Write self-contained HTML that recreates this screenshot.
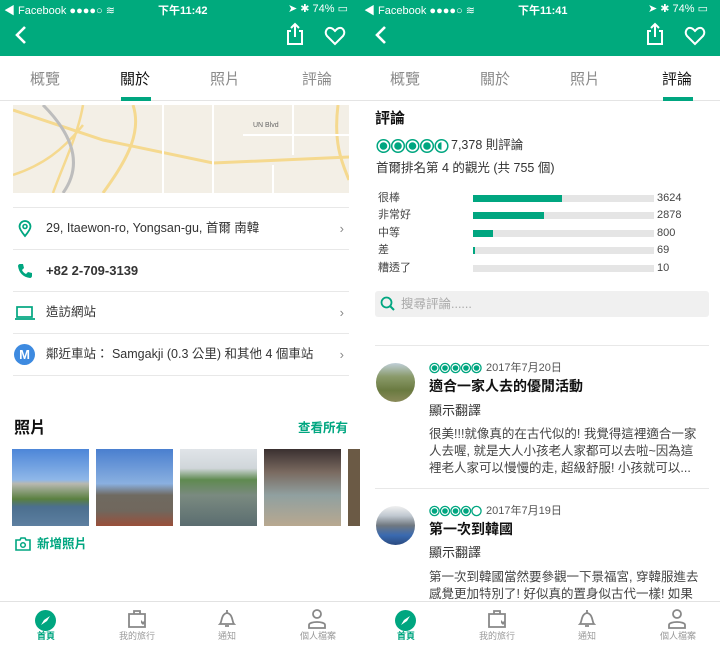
<!DOCTYPE html>
<html><head><meta charset="utf-8"><style>
*{margin:0;padding:0;box-sizing:border-box}
body{width:720px;height:645px;overflow:hidden;background:#fff;font-family:"Liberation Sans","Noto Sans CJK TC",sans-serif;position:relative}
.ph{position:absolute;top:0;width:360px;height:645px;overflow:hidden;background:#fff}
.g{color:#00a680}
.abs{position:absolute}
.hdr{position:absolute;left:0;top:0;width:360px;height:56px;background:#00aa7d;color:#fff}
.sb{position:absolute;top:2px;font-size:11px;color:#fff}
.tabs{position:absolute;top:56px;left:0;width:360px;height:45px;border-bottom:1px solid #e4e4e4}
.tab{position:absolute;top:12px;font-size:15px;color:#8a8a8a;width:60px;text-align:center}
.tab.on{color:#111}
.ul{position:absolute;top:41px;width:30px;height:4px;background:#00a680}
.line{position:absolute;height:1px;background:#e8e8e8}
.t{position:absolute;font-size:12.5px;color:#333;white-space:nowrap;line-height:1}
.chev{position:absolute;right:16px;color:#888;font-size:13px;line-height:1}
.nav{position:absolute;top:601px;left:0;width:360px;height:44px;border-top:1px solid #e2e2e2;background:#fff}
.nl{position:absolute;top:30px;font-size:9px;color:#999;width:60px;text-align:center;line-height:1}
.bar{position:absolute;left:113px;width:181px;height:7px;background:#e5e5e5}
.bar i{display:block;height:7px;background:#00a680}
.bl{position:absolute;left:18px;font-size:11px;color:#444;line-height:1}
.bn{position:absolute;left:297px;font-size:11px;color:#444;line-height:1}
.rv{position:absolute;left:69px;font-size:12.5px;color:#444;line-height:17px;width:272px}
</style></head><body>

<div class="ph" style="left:0">
 <div class="hdr">
  <div class="sb" style="left:4px">◀ Facebook ●●●●○ ≋</div>
  <div class="sb" style="left:158px;font-weight:bold">下午11:42</div>
  <div class="sb" style="left:288px">➤ ✱ 74% ▭</div>
  <svg class="abs" style="left:14px;top:25px" width="16" height="20"><path d="M11 2 L3 10 L11 18" stroke="#fff" stroke-width="2.6" fill="none"/></svg>
  <svg class="abs" style="left:285px;top:22px" width="20" height="24"><path d="M6 9 H3 V22 H17 V9 H14 M10 15 V2 M6 6 L10 2 L14 6" stroke="#fff" stroke-width="2" fill="none"/></svg>
  <svg class="abs" style="left:324px;top:26px" width="22" height="20"><path d="M11 18 L3 10 C0 6 3 1 7 2 C9 2.5 10 4 11 5 C12 4 13 2.5 15 2 C19 1 22 6 19 10 Z" stroke="#fff" stroke-width="2" fill="none"/></svg>
 </div>
 <div class="tabs">
  <div class="tab" style="left:15px">概覽</div><div class="tab on" style="left:105px">關於</div>
  <div class="tab" style="left:195px">照片</div><div class="tab" style="left:287px">評論</div>
  <div class="ul" style="left:121px"></div>
 </div>
 <svg class="abs" style="left:13px;top:105px" width="336" height="88">
  <rect width="336" height="88" fill="#f3efe6"/>
  <path d="M0 5 L90 35 L200 58 L336 52" stroke="#f5d98f" stroke-width="3" fill="none"/>
  <path d="M120 0 C130 30 110 60 90 88" stroke="#f5d98f" stroke-width="3" fill="none"/>
  <path d="M70 0 C65 30 50 60 40 88 M0 70 C30 60 50 45 70 20" stroke="#f5d98f" stroke-width="2.5" fill="none"/>
  <path d="M325 0 C320 40 330 60 336 75" stroke="#f5d98f" stroke-width="3" fill="none"/>
  <path d="M30 0 C60 30 70 60 50 88" stroke="#bdbdbd" stroke-width="3" fill="none"/>
  <path d="M200 0 V88 M230 30 H336 M150 0 V88 M260 60 V88 M280 0 V50" stroke="#fff" stroke-width="2" fill="none"/>
  <text x="240" y="22" font-size="7" fill="#666" font-family="Liberation Sans">UN Blvd</text>
 </svg>
 <div class="line" style="left:13px;width:336px;top:207px"></div>
 <div class="line" style="left:13px;width:336px;top:249px"></div>
 <div class="line" style="left:13px;width:336px;top:291px"></div>
 <div class="line" style="left:13px;width:336px;top:333px"></div>
 <div class="line" style="left:13px;width:336px;top:375px"></div>
 <svg class="abs" style="left:18px;top:220px" width="14" height="18"><path d="M7 16 C2 10 1.5 8 1.5 6.5 A5.5 5.5 0 0 1 12.5 6.5 C12.5 8 12 10 7 16Z" stroke="#00a680" stroke-width="1.8" fill="none"/><circle cx="7" cy="6.5" r="2" stroke="#00a680" stroke-width="1.6" fill="none"/></svg>
 <div class="t" style="left:46px;top:222px">29, Itaewon-ro, Yongsan-gu, 首爾 南韓</div><div class="chev" style="top:222px">›</div>
 <svg class="abs" style="left:17px;top:263px" width="16" height="16"><path d="M3 1 L6 1 L7 5 L5 7 C6 9 7 10 9 11 L11 9 L15 10 L15 13 C15 14 14 15 13 15 C6 14 2 10 1 3 C1 2 2 1 3 1Z" fill="#00a680"/></svg>
 <div class="t g" style="left:46px;top:264px;font-weight:bold;font-size:13px">+82 2-709-3139</div>
 <svg class="abs" style="left:15px;top:306px" width="20" height="14"><rect x="2" y="1" width="15" height="10" stroke="#00a680" stroke-width="1.7" fill="none"/><path d="M0 13 H20" stroke="#00a680" stroke-width="1.7"/></svg>
 <div class="t" style="left:46px;top:306px">造訪網站</div><div class="chev" style="top:306px">›</div>
 <div class="abs" style="left:14px;top:344px;width:21px;height:21px;border-radius:50%;background:#3d8ae0;color:#fff;font-weight:bold;font-size:13px;text-align:center;line-height:21px">M</div>
 <div class="t" style="left:46px;top:348px">鄰近車站： Samgakji (0.3 公里) 和其他 4 個車站</div><div class="chev" style="top:348px">›</div>
 <div class="abs" style="left:14px;top:421px;font-size:16px;font-weight:bold;color:#111;line-height:1">照片</div>
 <div class="abs g" style="left:298px;top:422px;font-size:12.5px;font-weight:bold;line-height:1">查看所有</div>
 <div class="abs" style="left:12px;top:449px;width:77px;height:77px;background:linear-gradient(#4d86d8 0,#8fb7e8 40%,#b8b8b0 45%,#5a8040 65%,#4b6f8f 75%,#5d7fa0 100%)"></div>
 <div class="abs" style="left:96px;top:449px;width:77px;height:77px;background:linear-gradient(#4a7fcf 0,#8ab0e0 45%,#6f6a60 60%,#70675d 80%,#9a4f3a 100%)"></div>
 <div class="abs" style="left:180px;top:449px;width:77px;height:77px;background:linear-gradient(#e0e4e8 0,#d0d6da 25%,#5f8a50 40%,#7a8a80 60%,#5b6d70 100%)"></div>
 <div class="abs" style="left:264px;top:449px;width:77px;height:77px;background:linear-gradient(#3a3030 0,#7a6a60 30%,#90a0a0 60%,#b8a890 100%)"></div>
 <div class="abs" style="left:348px;top:449px;width:12px;height:77px;background:#6b5a45"></div>
 <svg class="abs" style="left:15px;top:537px" width="16" height="14"><path d="M1 3 H5 L6 1 H10 L11 3 H15 V13 H1Z" stroke="#00a680" stroke-width="1.6" fill="none"/><circle cx="8" cy="8" r="2.3" stroke="#00a680" stroke-width="1.5" fill="none"/></svg>
 <div class="abs g" style="left:37px;top:538px;font-size:12.5px;font-weight:bold;line-height:1">新增照片</div>
 <div class="nav">
  <div class="abs" style="left:35px;top:8px;width:21px;height:21px;border-radius:50%;background:#00a680"></div>
  <svg class="abs" style="left:39px;top:12px" width="13" height="13"><path d="M11 2 L5 6 L2 11 L8 7Z" fill="#fff"/></svg>
  <div class="nl" style="left:16px;color:#00a680;font-weight:bold">首頁</div>
  <svg class="abs" style="left:126px;top:6px" width="22" height="22"><path d="M8 6 V3 H14 V6 M3 6 H19 V19 H3Z" stroke="#888" stroke-width="1.8" fill="none"/><path d="M15 12 l2 2 l2-2 v3 l-2 2 l-2-2Z" fill="#888"/></svg>
  <div class="nl" style="left:107px">我的旅行</div>
  <svg class="abs" style="left:217px;top:6px" width="20" height="22"><path d="M3 16 C5 14 4 6 10 5 C16 6 15 14 17 16Z M8 18 H12 M10 2 V5" stroke="#888" stroke-width="1.8" fill="none"/></svg>
  <div class="nl" style="left:197px">通知</div>
  <svg class="abs" style="left:306px;top:6px" width="22" height="22"><circle cx="11" cy="6" r="4" stroke="#888" stroke-width="1.8" fill="none"/><path d="M3 20 V17 C3 13 19 13 19 17 V20Z" stroke="#888" stroke-width="1.8" fill="none"/></svg>
  <div class="nl" style="left:288px">個人檔案</div>
 </div>
</div>

<div class="ph" style="left:360px">
 <div class="hdr">
  <div class="sb" style="left:4px">◀ Facebook ●●●●○ ≋</div>
  <div class="sb" style="left:158px;font-weight:bold">下午11:41</div>
  <div class="sb" style="left:288px">➤ ✱ 74% ▭</div>
  <svg class="abs" style="left:14px;top:25px" width="16" height="20"><path d="M11 2 L3 10 L11 18" stroke="#fff" stroke-width="2.6" fill="none"/></svg>
  <svg class="abs" style="left:285px;top:22px" width="20" height="24"><path d="M6 9 H3 V22 H17 V9 H14 M10 15 V2 M6 6 L10 2 L14 6" stroke="#fff" stroke-width="2" fill="none"/></svg>
  <svg class="abs" style="left:324px;top:26px" width="22" height="20"><path d="M11 18 L3 10 C0 6 3 1 7 2 C9 2.5 10 4 11 5 C12 4 13 2.5 15 2 C19 1 22 6 19 10 Z" stroke="#fff" stroke-width="2" fill="none"/></svg>
 </div>
 <div class="tabs">
  <div class="tab" style="left:15px">概覽</div><div class="tab" style="left:105px">關於</div>
  <div class="tab" style="left:195px">照片</div><div class="tab on" style="left:287px">評論</div>
  <div class="ul" style="left:303px"></div>
 </div>
 <div class="abs" style="left:15px;top:111px;font-size:15px;font-weight:bold;color:#111;line-height:1">評論</div>
 <svg class="abs" style="left:16px;top:138px" width="75" height="16">
  <g stroke="#00a680" stroke-width="1.5" fill="none"><circle cx="7.5" cy="8" r="6.3"/><circle cx="22" cy="8" r="6.3"/><circle cx="36.5" cy="8" r="6.3"/><circle cx="51" cy="8" r="6.3"/><circle cx="65.5" cy="8" r="6.3"/></g>
  <g fill="#00a680"><circle cx="7.5" cy="8" r="3.8"/><circle cx="22" cy="8" r="3.8"/><circle cx="36.5" cy="8" r="3.8"/><circle cx="51" cy="8" r="3.8"/><path d="M65.5 4.2 A3.8 3.8 0 0 0 65.5 11.8Z"/></g>
 </svg>
 <div class="t" style="left:91px;top:139px;font-size:12.5px">7,378 則評論</div>
 <div class="t" style="left:16px;top:162px;font-size:12.5px">首爾排名第 4 的觀光 (共 755 個)</div>
 <div class="bl" style="top:193px">很棒</div><div class="bar" style="top:195px"><i style="width:89px"></i></div><div class="bn" style="top:193px">3624</div>
 <div class="bl" style="top:210px">非常好</div><div class="bar" style="top:212px"><i style="width:71px"></i></div><div class="bn" style="top:210px">2878</div>
 <div class="bl" style="top:228px">中等</div><div class="bar" style="top:230px"><i style="width:20px"></i></div><div class="bn" style="top:228px">800</div>
 <div class="bl" style="top:245px">差</div><div class="bar" style="top:247px"><i style="width:2px"></i></div><div class="bn" style="top:245px">69</div>
 <div class="bl" style="top:263px">糟透了</div><div class="bar" style="top:265px"></div><div class="bn" style="top:263px">10</div>
 <div class="abs" style="left:15px;top:291px;width:334px;height:26px;background:#f0f0f0;border-radius:3px"></div>
 <svg class="abs" style="left:20px;top:296px" width="16" height="16"><circle cx="6.5" cy="6.5" r="5" stroke="#00a680" stroke-width="1.8" fill="none"/><path d="M10 10 L14 14" stroke="#00a680" stroke-width="2"/></svg>
 <div class="t" style="left:41px;top:298px;color:#aaa;font-size:12.5px">搜尋評論......</div>
 <div class="line" style="left:15px;width:334px;top:345px"></div>
 <div class="abs" style="left:16px;top:363px;width:39px;height:39px;border-radius:50%;background:linear-gradient(#c0cfd8 0,#8a9a6a 35%,#6a7a40 70%,#8a8a5a 100%)"></div>
 <svg class="abs" style="left:69px;top:362px" width="54" height="12"><g stroke="#00a680" stroke-width="1.3" fill="none"><circle cx="5.5" cy="6" r="4.6"/><circle cx="16" cy="6" r="4.6"/><circle cx="26.5" cy="6" r="4.6"/><circle cx="37" cy="6" r="4.6"/><circle cx="47.5" cy="6" r="4.6"/></g><g fill="#00a680"><circle cx="5.5" cy="6" r="2.8"/><circle cx="16" cy="6" r="2.8"/><circle cx="26.5" cy="6" r="2.8"/><circle cx="37" cy="6" r="2.8"/><circle cx="47.5" cy="6" r="2.8"/></g></svg>
 <div class="t" style="left:126px;top:363px;font-size:11px;color:#555">2017年7月20日</div>
 <div class="t" style="left:69px;top:379px;font-size:14px;font-weight:bold;color:#111">適合一家人去的優閒活動</div>
 <div class="t g" style="left:69px;top:404px;font-size:13px">顯示翻譯</div>
 <div class="rv" style="top:426px">很美!!!就像真的在古代似的! 我覺得這裡適合一家人去喔, 就是大人小孩老人家都可以去啦~因為這裡老人家可以慢慢的走, 超級舒服! 小孩就可以...</div>
 <div class="line" style="left:15px;width:334px;top:488px"></div>
 <div class="abs" style="left:16px;top:506px;width:39px;height:39px;border-radius:50%;background:linear-gradient(#f0f0f0 0,#c0c8d0 25%,#707880 50%,#3a6ab0 75%,#2a4a80 100%)"></div>
 <svg class="abs" style="left:69px;top:505px" width="54" height="12"><g stroke="#00a680" stroke-width="1.3" fill="none"><circle cx="5.5" cy="6" r="4.6"/><circle cx="16" cy="6" r="4.6"/><circle cx="26.5" cy="6" r="4.6"/><circle cx="37" cy="6" r="4.6"/><circle cx="47.5" cy="6" r="4.6"/></g><g fill="#00a680"><circle cx="5.5" cy="6" r="2.8"/><circle cx="16" cy="6" r="2.8"/><circle cx="26.5" cy="6" r="2.8"/><circle cx="37" cy="6" r="2.8"/></g></svg>
 <div class="t" style="left:126px;top:506px;font-size:11px;color:#555">2017年7月19日</div>
 <div class="t" style="left:69px;top:522px;font-size:14px;font-weight:bold;color:#111">第一次到韓國</div>
 <div class="t g" style="left:69px;top:546px;font-size:13px">顯示翻譯</div>
 <div class="rv" style="top:569px">第一次到韓國當然要參觀一下景福宮, 穿韓服進去感覺更加特別了! 好似真的置身似古代一樣! 如果未來想再來韓國旅遊一定要再回來看看</div>
 <div class="nav">
  <div class="abs" style="left:35px;top:8px;width:21px;height:21px;border-radius:50%;background:#00a680"></div>
  <svg class="abs" style="left:39px;top:12px" width="13" height="13"><path d="M11 2 L5 6 L2 11 L8 7Z" fill="#fff"/></svg>
  <div class="nl" style="left:16px;color:#00a680;font-weight:bold">首頁</div>
  <svg class="abs" style="left:126px;top:6px" width="22" height="22"><path d="M8 6 V3 H14 V6 M3 6 H19 V19 H3Z" stroke="#888" stroke-width="1.8" fill="none"/><path d="M15 12 l2 2 l2-2 v3 l-2 2 l-2-2Z" fill="#888"/></svg>
  <div class="nl" style="left:107px">我的旅行</div>
  <svg class="abs" style="left:217px;top:6px" width="20" height="22"><path d="M3 16 C5 14 4 6 10 5 C16 6 15 14 17 16Z M8 18 H12 M10 2 V5" stroke="#888" stroke-width="1.8" fill="none"/></svg>
  <div class="nl" style="left:197px">通知</div>
  <svg class="abs" style="left:306px;top:6px" width="22" height="22"><circle cx="11" cy="6" r="4" stroke="#888" stroke-width="1.8" fill="none"/><path d="M3 20 V17 C3 13 19 13 19 17 V20Z" stroke="#888" stroke-width="1.8" fill="none"/></svg>
  <div class="nl" style="left:288px">個人檔案</div>
 </div>
</div>
</body></html>
